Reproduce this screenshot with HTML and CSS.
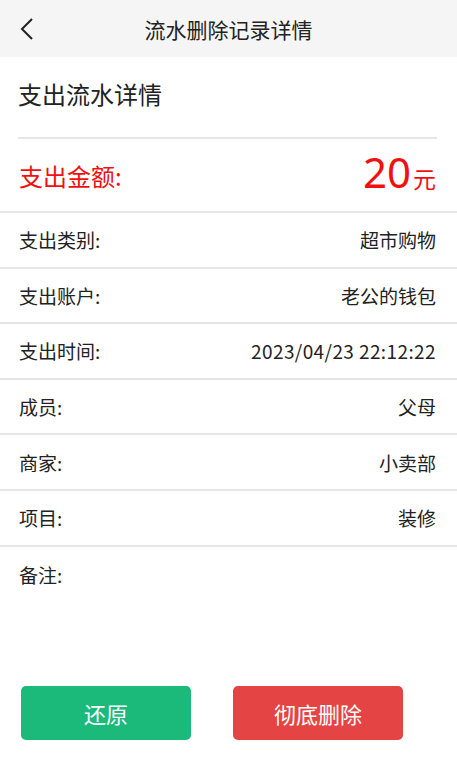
FILE: index.html
```html
<!DOCTYPE html>
<html lang="zh-CN">
<head>
  <meta charset="UTF-8">
  <meta name="viewport" content="width=device-width, initial-scale=1.0">
  <title>流水删除记录详情</title>
  <link rel="stylesheet" href="styles.css">
</head>
<body>
  <div class="header">
    <svg class="back" width="14" height="24" viewBox="0 0 14 24">
      <path d="M12 2 L2 12 L12 22" fill="none" stroke="#222" stroke-width="2"/>
    </svg>
    <div class="title">流水删除记录详情</div>
  </div>

  <div class="section-title">支出流水详情</div>

  <div class="amount">
    <span class="amount-label">支出金额:</span>
    <span class="amount-value">20<small>元</small></span>
  </div>

  <div class="row"><span>支出类别:</span><span>超市购物</span></div>
  <div class="row"><span>支出账户:</span><span>老公的钱包</span></div>
  <div class="row"><span>支出时间:</span><span class="date">2023/04/23 22:12:22</span></div>
  <div class="row"><span>成员:</span><span>父母</span></div>
  <div class="row"><span>商家:</span><span>小卖部</span></div>
  <div class="row"><span>项目:</span><span>装修</span></div>
  <div class="row note"><span>备注:</span><span></span></div>

  <div class="actions">
    <button class="btn btn-restore">还原</button>
    <button class="btn btn-delete">彻底删除</button>
  </div>
</body>
</html>
```

FILE: styles.css
```css
body {
  margin: 0;
  font-family: "Noto Sans CJK SC", "Noto Sans", sans-serif;
  color: #222;
  background: #fff;
}
.header {
  position: relative;
  height: 57px;
  background-color: #f5f5f5;
  display: flex;
  align-items: center;
  justify-content: center;
}
.back {
  position: absolute;
  left: 20px;
  top: 17px;
}
.title {
  font-size: 21px;
}
.section-title {
  box-sizing: border-box;
  height: 82px;
  margin: 0 20px 0 18px;
  padding-top: 18px;
  font-size: 24px;
  line-height: 38px;
  border-bottom: 2px solid #e6e6e6;
}
.amount {
  box-sizing: border-box;
  height: 74px;
  display: flex;
  justify-content: space-between;
  align-items: center;
  padding: 0 21px 0 19px;
  border-bottom: 2px solid #e6e6e6;
  color: #f01010;
}
.amount-label {
  font-size: 24px;
}
.amount-value {
  font-family: "Noto Sans", sans-serif;
  font-size: 42px;
  line-height: 49px;
}
.amount-value small {
  font-family: "Noto Sans CJK SC", sans-serif;
  font-size: 23px;
  margin-left: 2px;
}
.row {
  box-sizing: border-box;
  height: 55.6px;
  display: flex;
  justify-content: space-between;
  align-items: center;
  padding: 0 21px 0 19px;
  border-bottom: 2px solid #e6e6e6;
  font-size: 19px;
}
.row .date {
  letter-spacing: 0.4px;
}
.row.note {
  border-bottom: none;
  align-items: flex-start;
  padding-top: 14px;
  height: 139px;
}
.actions {
  display: flex;
  padding: 0 54px 0 21px;
  justify-content: space-between;
}
.btn {
  width: 170px;
  height: 54px;
  border: none;
  border-radius: 5px;
  color: #fff;
  font-size: 22px;
  font-family: "Noto Sans CJK SC", sans-serif;
}
.btn-restore {
  background-color: #1bb97a;
}
.btn-delete {
  background-color: #e54444;
}
```
